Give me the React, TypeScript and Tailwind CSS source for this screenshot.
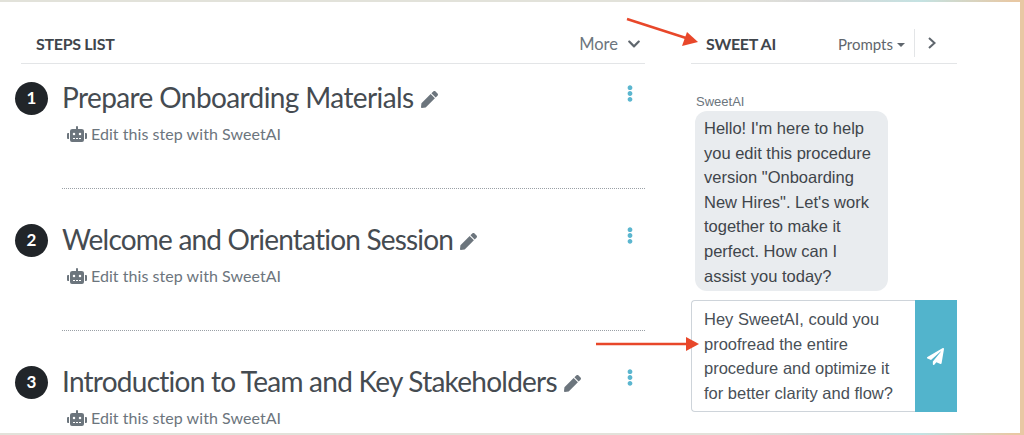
// App.tsx
import React from 'react';
import { FaChevronDown, FaEllipsisV, FaPaperPlane, FaPen, FaRobot } from 'react-icons/fa';

const steps = [
  { n: 1, title: 'Prepare Onboarding Materials', track: 'tracking-[-0.6px]' },
  { n: 2, title: 'Welcome and Orientation Session', track: 'tracking-[-0.8px]' },
  { n: 3, title: 'Introduction to Team and Key Stakeholders', track: 'tracking-[-0.75px]' },
];

const Step = ({ n, title, track, last }: { n: number; title: string; track: string; last: boolean }) => (
  <div className="h-[142px] -ml-[6px] w-[630px] flex flex-col">
    <div className="flex items-center h-[40px]">
      <div className="w-[33px] h-[33px] rounded-full bg-[#212529] text-white font-['Lato'] font-bold text-[17px] flex items-center justify-center shrink-0">
        {n}
      </div>
      <div className={`ml-[14px] -mt-[3px] text-[#454b51] text-[28px] font-['Lato'] whitespace-nowrap leading-[40px] ${track}`}>{title}</div>
      <FaPen className="ml-[7px] mt-[3px] text-[#6c757d] w-[17px] h-[17px] shrink-0" />
      <div className="flex-1" />
      <FaEllipsisV className="mr-[7px] -mt-[10px] text-[#5bb6cf] w-[16px] h-[17px] shrink-0" />
    </div>
    <div className="ml-[52px] mt-[4px] flex items-center text-[#6c757d] text-[16px] tracking-[0.05px] font-['Lato'] leading-[24px]">
      <FaRobot className="w-[20px] h-[16px] mr-[4px]" />
      Edit this step with SweetAI
    </div>
    {!last && <div className="ml-[47px] mt-[42px] border-t border-dotted border-[#9aa0a6]" />}
  </div>
);

export default function App() {
  return (
    <div className="w-[1024px] h-[435px] overflow-hidden pt-[2px] pb-[2px] pr-[4px] bg-[linear-gradient(90deg,#e2e2da_0%,#e2e2da_72%,#d8d8d8_80%,#c4e2e2_90%,#e8c8a4_99%)]">
      <div className="relative h-full bg-white flex font-['Lato']">
        <div className="ml-[21px] w-[624px] shrink-0">
          <div className="h-[62px] border-b border-[#e3e5e7] flex items-end pb-[9px] pl-[15px] pr-[4px]">
            <span className="font-bold text-[#3f454b] text-[16px] tracking-[-0.3px] leading-[20px]">STEPS LIST</span>
            <span className="ml-auto text-[#6c757d] text-[16.5px] leading-[20px]">More</span>
            <FaChevronDown className="ml-[9px] mb-[3px] text-[#5f666d] w-[14px] h-[14px]" />
          </div>
          <div className="pt-[14px]">
            {steps.map((s, i) => (
              <Step key={s.n} n={s.n} title={s.title} track={s.track} last={i === steps.length - 1} />
            ))}
          </div>
        </div>

        <div className="ml-[46px] w-[266px] shrink-0">
          <div className="h-[62px] border-b border-[#e3e5e7] flex items-end pb-[4px]">
            <span className="ml-[15px] mb-[5px] font-bold text-[#3f454b] text-[16px] tracking-[-0.3px] leading-[20px]">SWEET AI</span>
            <span className="ml-auto mb-[5px] text-[#5f666d] text-[15px] leading-[20px]">Prompts</span>
            <span className="ml-[4px] mb-[12px] w-0 h-0 border-x-[4px] border-x-transparent border-t-[4px] border-t-[#5f666d]" />
            <div className="ml-[9px] h-[28px] border-l border-[#e3e5e7] flex items-center pl-[12px] pr-[20px] mb-[2px]">
              <svg width="10" height="14" viewBox="0 0 10 14" fill="none" stroke="#5f666d" strokeWidth="2">
                <path d="M2 2l5.5 5L2 12" />
              </svg>
            </div>
          </div>

          <div className="pl-[4px] pt-[30px] font-['Liberation_Sans',sans-serif]">
            <div className="ml-[1px] text-[#6c757d] text-[13px] leading-[16px]">SweetAI</div>
            <div className="mt-[1px] w-[193px] h-[180px] rounded-[12px] bg-[#e9ecef] px-[9px] pt-[5px] text-[#3f454b] text-[16.5px] leading-[24.6px]">
              Hello! I'm here to help you edit this procedure version "Onboarding New Hires". Let's work together to make it perfect. How can I assist you today?
            </div>
          </div>

          <div className="mt-[9px] h-[112px] flex">
            <div className="w-[224px] border border-[#ced4da] border-r-0 rounded-l-[4px] pl-[12px] pr-[12px] pt-[6px] text-[#495057] text-[16.5px] leading-[24.6px] font-['Liberation_Sans',sans-serif]">
              Hey SweetAI, could you proofread the entire procedure and optimize it for better clarity and flow?
            </div>
            <div className="w-[42px] bg-[#52b4cc] flex items-center justify-center">
              <FaPaperPlane className="-ml-[2px] text-white w-[17px] h-[17px]" />
            </div>
          </div>
        </div>

        {/* annotation arrows */}
        <svg className="absolute left-0 -top-[2px] pointer-events-none" width="1024" height="435">
          <path d="M627 19L686 38" stroke="#e8472a" strokeWidth="2.5" />
          <path d="M698 42L682 46L687 32Z" fill="#e8472a" />
          <path d="M596 344L688 344" stroke="#e8472a" strokeWidth="2.5" />
          <path d="M699 344L686 337L686 351Z" fill="#e8472a" />
        </svg>
      </div>
    </div>
  );
}
